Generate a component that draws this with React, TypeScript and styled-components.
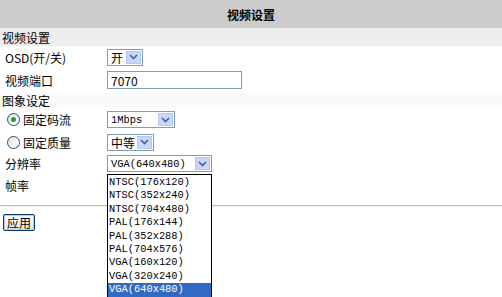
import React from 'react';
import styled, { createGlobalStyle, css } from 'styled-components';

const GlobalStyle = createGlobalStyle`
  html, body {
    margin: 0;
    padding: 0;
    background: #fff;
  }
  body {
    font-family: "Noto Sans CJK SC", "Liberation Sans", sans-serif;
    font-size: 12px;
    color: #000;
  }
`;

const monoFont = css`
  font-family: "Liberation Mono", "Noto Sans CJK SC", monospace;
  font-size: 10.4px;
`;

const Page = styled.div`
  position: relative;
  width: 502px;
  height: 297px;
  overflow: hidden;
`;

const TitleBar = styled.div`
  height: 28px;
  background: #cccccc;
  display: flex;
  align-items: center;
  justify-content: center;
  font-weight: bold;
  font-size: 12px;
`;

const SectionRow = styled.div<{ $bg: string; $height: number }>`
  height: ${(p) => p.$height}px;
  background: ${(p) => p.$bg};
  display: flex;
  align-items: center;
  padding-left: 2px;
`;

const FieldRow = styled.div<{ $height: number }>`
  height: ${(p) => p.$height}px;
  display: grid;
  grid-template-columns: 107px 1fr;
  align-items: center;
`;

const Label = styled.div`
  padding-left: 5px;
  display: flex;
  align-items: center;
  gap: 3px;
`;

const Radio = styled.span<{ $checked?: boolean }>`
  position: relative;
  width: 11px;
  height: 11px;
  margin-left: 2px;
  border-radius: 50%;
  border: 1px solid #1c5180;
  background: linear-gradient(135deg, #dcdcd7 0%, #fff 70%);
  &::after {
    content: '';
    display: ${(p) => (p.$checked ? 'block' : 'none')};
    position: absolute;
    left: 3px;
    top: 3px;
    width: 5px;
    height: 5px;
    border-radius: 50%;
    background: #21a121;
  }
`;

const SelectBox = styled.div<{ $width: number }>`
  width: ${(p) => p.$width}px;
  height: 17px;
  box-sizing: border-box;
  border: 1px solid #7f9db9;
  background: #fff;
  display: flex;
  align-items: center;
  justify-content: space-between;
  padding: 0 1px 0 3px;
`;

const SelectText = styled.span<{ $mono?: boolean }>`
  ${(p) => (p.$mono ? monoFont : '')}
  white-space: nowrap;
`;

const ArrowButton = styled.span`
  width: 15px;
  height: 13px;
  background: #c7d7fb;
  border: 1px solid #b5c8f5;
  box-sizing: border-box;
  display: flex;
  align-items: center;
  justify-content: center;
`;

const TextInput = styled.div`
  width: 135px;
  height: 18px;
  box-sizing: border-box;
  border: 1px solid #7f9db9;
  padding-left: 3px;
  display: flex;
  align-items: center;
`;

const Divider = styled.div`
  margin-top: 9px;
  border-top: 1px solid #c2c0b5;
  border-bottom: 1px solid #ecebe6;
`;

const ApplyButton = styled.button`
  margin: 7px 0 0 3px;
  height: 17px;
  padding: 0 3px;
  border: 1px solid #003c74;
  border-radius: 2px;
  background: linear-gradient(#ffffff, #ece9d8);
  font-family: "Noto Sans CJK SC", sans-serif;
  font-size: 12px;
  line-height: 14px;
  box-shadow: inset 0 0 0 1px #b6c9f0;
`;

const DropList = styled.div`
  position: absolute;
  left: 107px;
  top: 174px;
  width: 105px;
  box-sizing: border-box;
  border: 1px solid #000;
  background: #fff;
  padding-top: 1px;
`;

const DropItem = styled.div<{ $active?: boolean }>`
  ${monoFont}
  height: 13.4px;
  line-height: 13px;
  padding-left: 1px;
  background: ${(p) => (p.$active ? '#316ac5' : 'transparent')};
  color: ${(p) => (p.$active ? '#fff' : '#000')};
`;

const Chevron = () => (
  <svg width="9" height="6" viewBox="0 0 9 6">
    <path d="M1 1 L4.5 4.5 L8 1" fill="none" stroke="#4d6185" strokeWidth="1.6" />
  </svg>
);

const Select = ({ width, value, mono }: { width: number; value: string; mono?: boolean }) => (
  <SelectBox $width={width}>
    <SelectText $mono={mono}>{value}</SelectText>
    <ArrowButton>
      <Chevron />
    </ArrowButton>
  </SelectBox>
);

const resolutions = [
  'NTSC(176x120)',
  'NTSC(352x240)',
  'NTSC(704x480)',
  'PAL(176x144)',
  'PAL(352x288)',
  'PAL(704x576)',
  'VGA(160x120)',
  'VGA(320x240)',
  'VGA(640x480)',
];

const App = () => {
  return (
    <Page>
      <GlobalStyle />
      <TitleBar>视频设置</TitleBar>
      <SectionRow $bg="#ececec" $height={18}>视频设置</SectionRow>
      <FieldRow $height={22}>
        <Label>OSD(开/关)</Label>
        <Select width={36} value="开" />
      </FieldRow>
      <FieldRow $height={24}>
        <Label>视频端口</Label>
        <TextInput>7070</TextInput>
      </FieldRow>
      <SectionRow $bg="#fafafa" $height={16}>图象设定</SectionRow>
      <FieldRow $height={23}>
        <Label>
          <Radio $checked />
          固定码流
        </Label>
        <Select width={68} value="1Mbps" mono />
      </FieldRow>
      <FieldRow $height={22}>
        <Label>
          <Radio />
          固定质量
        </Label>
        <Select width={47} value="中等" />
      </FieldRow>
      <FieldRow $height={21}>
        <Label>分辨率</Label>
        <Select width={105} value="VGA(640x480)" mono />
      </FieldRow>
      <FieldRow $height={22}>
        <Label>帧率</Label>
        <div />
      </FieldRow>
      <Divider />
      <ApplyButton>应用</ApplyButton>
      <DropList>
        {resolutions.map((r) => (
          <DropItem key={r} $active={r === 'VGA(640x480)'}>
            {r}
          </DropItem>
        ))}
      </DropList>
    </Page>
  );
};

export default App;
